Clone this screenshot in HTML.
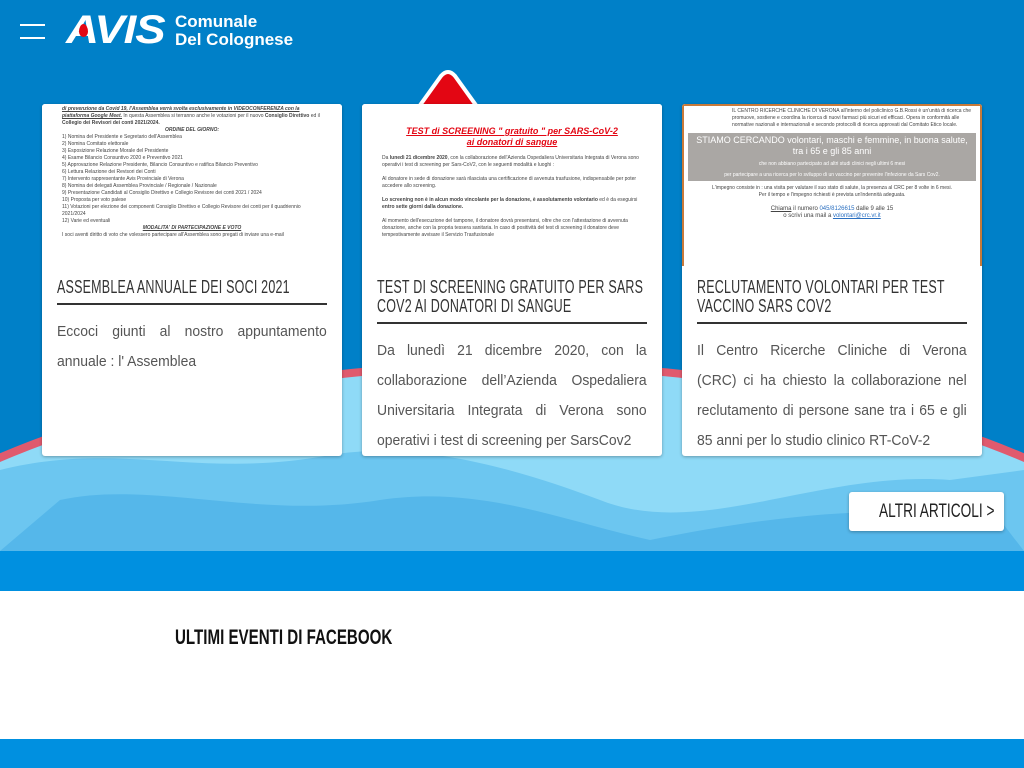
<!DOCTYPE html>
<html><head><meta charset="utf-8"><style>
*{margin:0;padding:0;box-sizing:border-box}
body{width:1024px;height:768px;overflow:hidden;background:#0080c8;font-family:"Liberation Sans",sans-serif;position:relative}
.abs{position:absolute}
.card{position:absolute;top:104px;width:300px;height:352px;background:#fff;border-radius:3px;box-shadow:0 1px 3px rgba(0,0,0,.3);overflow:hidden}
.img{height:162px;background:#fff;font-size:5px;line-height:7px;color:#444;padding:2px 20px;overflow:hidden}
.tw{margin:12px 15px 0;padding-bottom:6px;border-bottom:2px solid #333;width:270px}
.t{width:389px;transform:scaleX(.694);transform-origin:0 0;font-size:18px;line-height:19px;color:#333;letter-spacing:.3px}
.pw{margin:12px 15px 0;width:270px}
.p{width:290px;transform:scaleX(.93);transform-origin:0 0;font-size:15px;line-height:30px;color:#555;text-align:justify;text-align-last:left}
</style></head><body>
<div class="abs" style="left:20px;top:24px;width:25px;height:2px;background:#fff"></div>
<div class="abs" style="left:20px;top:37px;width:25px;height:2px;background:#fff"></div>
<div class="abs" style="left:66px;top:10px;font:italic 900 40px/40px 'Liberation Sans',sans-serif;color:#fff;letter-spacing:-1px;transform:scaleX(1.14);transform-origin:0 0">AVIS</div>
<div class="abs" style="left:79px;top:24px;width:9px;height:13px;background:#e30613;border-radius:50% 50% 50% 50%/60% 60% 40% 40%"></div>
<div class="abs" style="left:175px;top:13px;font:bold 17px/18px 'Liberation Sans',sans-serif;color:#fff">Comunale<br>Del Colognese</div>
<svg class="abs" style="left:0;top:0" width="1024" height="551">
<ellipse cx="512" cy="720" rx="760" ry="355" fill="#8fdaf7" stroke="#e05a6e" stroke-width="8"/>
<path d="M0 470 C120 440 200 480 330 455 C420 440 520 470 600 500 C700 540 820 470 950 480 L1024 470 L1024 551 L0 551Z" fill="#6cc6f0"/>
<path d="M60 500 C150 480 260 520 380 500 C480 485 560 520 650 540 C750 520 880 500 1000 520 L1024 551 L0 551Z" fill="#55b7ea"/>
</svg>
<div class="abs" style="left:0;top:551px;width:1024px;height:40px;background:#0090e0"></div>
<div class="abs" style="left:0;top:591px;width:1024px;height:148px;background:#fff"></div>
<div class="abs" style="left:0;top:739px;width:1024px;height:29px;background:#0090e0"></div>
<div class="abs" style="left:175px;top:626px;font:bold 21px/24px 'Liberation Sans',sans-serif;color:#111;transform:scaleX(.72);transform-origin:0 0;white-space:nowrap">ULTIMI EVENTI DI FACEBOOK</div>
<svg class="abs" style="left:410px;top:68px" width="76" height="40"><path d="M8 40 L31 8 Q38 0 45 8 L68 40Z" fill="#e30613" stroke="#fff" stroke-width="4"/></svg>
<div class="card" style="left:42px">
<div class="img"><u><b><i>di prevenzione da Covid 19, l'Assemblea verrà svolta esclusivamente in VIDEOCONFERENZA con la piattaforma Google Meet.</i></b></u> In questa Assemblea si terranno anche le votazioni per il nuovo <b>Consiglio Direttivo</b> ed il <b>Collegio dei Revisori dei conti 2021/2024.</b><br><center><b><i>ORDINE DEL GIORNO:</i></b></center>1) Nomina del Presidente e Segretario dell'Assemblea<br>2) Nomina Comitato elettorale<br>3) Esposizione Relazione Morale del Presidente<br>4) Esame Bilancio Consuntivo 2020 e Preventivo 2021<br>5) Approvazione Relazione Presidente, Bilancio Consuntivo e ratifica Bilancio Preventivo<br>6) Lettura Relazione dei Revisori dei Conti<br>7) Intervento rappresentante Avis Provinciale di Verona<br>8) Nomina dei delegati Assemblea Provinciale / Regionale / Nazionale<br>9) Presentazione Candidati al Consiglio Direttivo e Collegio Revisore dei conti 2021 / 2024<br>10) Proposta per voto palese<br>11) Votazioni per elezione dei componenti Consiglio Direttivo e Collegio Revisore dei conti per il quadriennio 2021/2024<br>12) Varie ed eventuali<br><center><b><i><u>MODALITA' DI PARTECIPAZIONE E VOTO</u></i></b></center>I soci aventi diritto di voto che volessero partecipare all'Assemblea sono pregati di inviare una e-mail</div>
<div class="tw"><div class="t">ASSEMBLEA ANNUALE DEI SOCI 2021</div></div>
<div class="pw"><div class="p">Eccoci giunti al nostro appuntamento annuale : l' Assemblea</div></div>
</div>
<div class="card" style="left:362px">
<div class="img" style="padding-top:22px"><center style="color:#e30613;font:bold italic 9px/11px 'Liberation Sans',sans-serif"><u>TEST di SCREENING " gratuito " per SARS-CoV-2<br>ai donatori di sangue</u></center><br>Da <b>lunedì 21 dicembre 2020</b>, con la collaborazione dell'Azienda Ospedaliera Universitaria Integrata di Verona sono operativi i test di screening per Sars-CoV2, con le seguenti modalità e luoghi :<br><br>Al donatore in sede di donazione sarà rilasciata una certificazione di avvenuta trasfusione, indispensabile per poter accedere allo screening.<br><br><b>Lo screening non è in alcun modo vincolante per la donazione, è assolutamento volontario</b> ed è da eseguirsi <b>entro sette giorni dalla donazione.</b><br><br>Al momento dell'esecuzione del tampone, il donatore dovrà presentarsi, oltre che con l'attestazione di avvenuta donazione, anche con la propria tessera sanitaria. In caso di positività del test di screening il donatore deve tempestivamente avvisare il Servizio Trasfusionale</div>
<div class="tw"><div class="t">TEST DI SCREENING GRATUITO PER SARS COV2 AI DONATORI DI SANGUE</div></div>
<div class="pw"><div class="p">Da lunedì 21 dicembre 2020, con la collaborazione dell’Azienda Ospedaliera Universitaria Integrata di Verona sono operativi i test di screening per SarsCov2</div></div>
</div>
<div class="card" style="left:682px">
<div class="img" style="padding:2px 4px 0 48px;border:2px solid #c87a3a;border-bottom:none">IL CENTRO RICERCHE CLINICHE DI VERONA all'interno del policlinico G.B.Rossi è un'unità di ricerca che promuove, sostiene e coordina la ricerca di nuovi farmaci più sicuri ed efficaci. Opera in conformità alle normative nazionali e internazionali e secondo protocolli di ricerca approvati dal Comitato Etico locale.
<div style="margin:4px 0 4px -44px;background:#aaa7a4;color:#fff;text-align:center;font-size:9px;line-height:11px;padding:2px">STIAMO CERCANDO volontari, maschi e femmine, in buona salute,<br>tra i 65 e gli 85 anni<br><span style="font-size:5px;line-height:6px">che non abbiano partecipato ad altri studi clinici negli ultimi 6 mesi<br>per partecipare a una ricerca per lo sviluppo di un vaccino per prevenire l'infezione da Sars Cov2.</span></div>
<div style="margin-left:-44px;text-align:center">L'impegno consiste in : una visita per valutare il suo stato di salute, la presenza al CRC per 8 volte in 6 mesi.<br>Per il tempo e l'impegno richiesti è prevista un'indennità adeguata.<br><br><span style="font-size:6px"><u>Chiama</u> il numero <span style="color:#2a6fc0">045/8126615</span> dalle 9 alle 15<br>o scrivi una mail a <u style="color:#2a6fc0">volontari@crc.vr.it</u></span></div></div>
<div class="tw"><div class="t">RECLUTAMENTO VOLONTARI PER TEST VACCINO SARS COV2</div></div>
<div class="pw"><div class="p">Il Centro Ricerche Cliniche di Verona (CRC) ci ha chiesto la collaborazione nel reclutamento di persone sane tra i 65 e gli 85 anni per lo studio clinico RT-CoV-2</div></div>
</div>
<div class="abs" style="left:849px;top:492px;width:155px;height:39px;background:#fff;border-radius:3px;box-shadow:0 1px 3px rgba(0,0,0,.3)"></div>
<div class="abs" style="left:879px;top:492px;font:19px/39px 'Liberation Sans',sans-serif;color:#222;white-space:nowrap;transform:scaleX(.72);transform-origin:0 0">ALTRI ARTICOLI &gt;</div>
</body></html>
